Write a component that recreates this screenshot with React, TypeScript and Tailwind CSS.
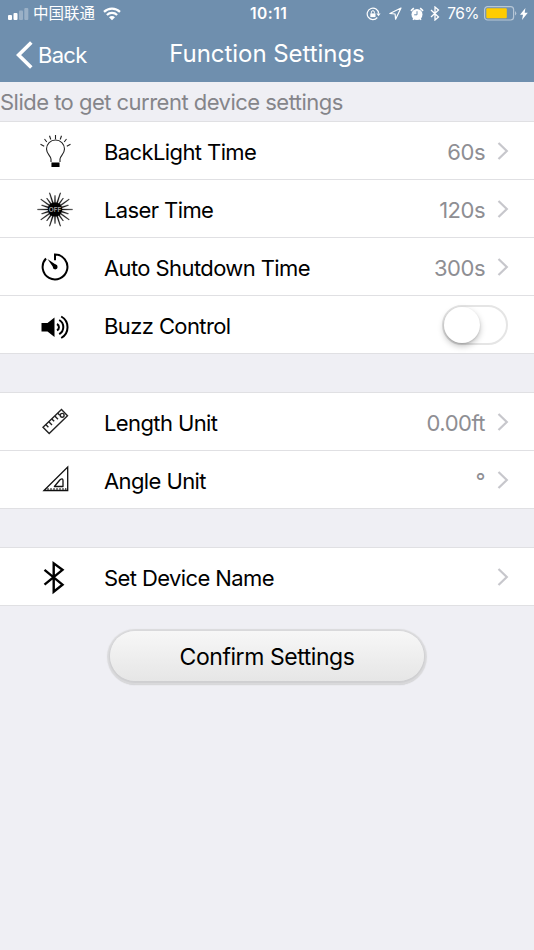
import type { ReactNode } from "react";

interface RowProps {
  icon: ReactNode;
  label: string;
  value?: string;
  toggle?: boolean;
}

function Chevron() {
  return (
    <svg width="12" height="20" viewBox="0 0 12 20" fill="none" stroke="#c7c7cc" strokeWidth="2.2">
      <path d="M1.5 2 9.8 10 1.5 18" />
    </svg>
  );
}

function BulbIcon() {
  return (
    <svg width="40" height="40" viewBox="0 0 40 40" fill="none" stroke="#222" strokeWidth="1.1">
      <path d="M16 31v-3c0-3-4.5-5-4.5-10a9 9 0 0 1 18 0c0 5-4.5 7-4.5 10v3" />
      <path d="M20.5 4v4.2M14.5 4.8l1.3 3.7M26.5 4.8l-1.3 3.7M9.5 8l2.3 3M31.5 8l-2.3 3M5.5 13.3l3.7 1.9M35.5 13.3l-3.7 1.9" />
      <path d="M17 32h7v3.5h-7z" fill="#000" stroke="#000" />
    </svg>
  );
}

function LaserIcon() {
  const rays = Array.from({ length: 20 }, (_, i) => i * 18);
  return (
    <svg width="40" height="40" viewBox="0 0 40 40">
      {rays.map((deg, i) => (
        <path
          key={deg}
          d={i % 2 === 0 ? "M19.4 13 19.7 2.5h.6l.3 10.5z" : "M19.4 13 19.7 6h.6l.3 7z"}
          transform={`translate(0 .5) rotate(${deg + 90} 20 20)`}
          fill="#111"
          stroke="#111"
          strokeWidth="0.3"
        />
      ))}
      <circle cx="20" cy="20.5" r="7.3" fill="#000" />
      <text x="20" y="22.9" textAnchor="middle" fontSize="6.4" fontWeight="600" fill="#aaa" fontFamily="Inter, sans-serif">
        OFF
      </text>
    </svg>
  );
}

function TimerIcon() {
  return (
    <svg width="40" height="40" viewBox="0 0 40 40" fill="none" stroke="#000" strokeWidth="2">
      <path d="M11 11.5A12.4 12.4 0 1 0 20 7.6v5.6" />
      <path d="M12.5 12 21.3 18 18.5 20.8z" fill="#000" stroke="none" />
      <circle cx="20.2" cy="20" r="2.4" fill="#000" stroke="none" />
    </svg>
  );
}

function SpeakerIcon() {
  return (
    <svg width="40" height="40" viewBox="0 0 40 40" fill="none" stroke="#000" strokeWidth="2">
      <path d="M6.5 18h6l7-5.5v19.5l-7-5.5h-6z" fill="#000" stroke="none" />
      <path d="M22 19a3.6 3.6 0 0 1 0 6.4M24.2 15a8.2 8.2 0 0 1 0 14.2M26.2 11.5a12.3 12.3 0 0 1 0 21.5" />
    </svg>
  );
}

function RulerIcon() {
  return (
    <svg width="40" height="40" viewBox="0 0 40 40" fill="none" stroke="#222" strokeWidth="1.4">
      <path d="M8 25.2 26.5 7.5l6 6.2L14.2 31.5z" />
      <path d="m10.8 22.6 2.6 2.6M13.8 19.8l3.2 3.2M16.8 16.9l2.4 2.4M19.8 14l3.2 3.2M22.8 11.2l2 2" />
      <circle cx="27.2" cy="13.3" r="1.9" />
    </svg>
  );
}

function TriangleIcon() {
  return (
    <svg width="40" height="40" viewBox="0 0 40 40" fill="none" stroke="#111" strokeWidth="1.3">
      <path d="M9 30.5 32.7 7v23.5z" />
      <path d="M19.4 26.5 24.8 20q3.2-2.4 3.2.6v5.9z" strokeLinejoin="round" />
      <path d="M13 30v-2M16 30v-2M19 30v-2M22 30v-2M25 30v-2M28 30v-2M30.8 30v-2" strokeWidth="1" />
    </svg>
  );
}

function BluetoothIcon() {
  return (
    <svg width="40" height="40" viewBox="0 0 40 40" fill="none" stroke="#000" strokeWidth="2.4">
      <path d="m9.5 12.8 18 14.9-8.8 7V6.3l8.8 6.5-18 14.9" />
    </svg>
  );
}

function Row({ icon, label, value, toggle }: RowProps) {
  return (
    <div className="flex h-[58px] items-center border-b border-[#e0e0e3] bg-white pr-[25px] pl-[35px]">
      <div className="mr-[29px] h-10 w-10 shrink-0">{icon}</div>
      <span className="flex-1 pt-[3px] text-[22px] tracking-[-0.6px] whitespace-nowrap text-black">{label}</span>
      {value && <span className="mr-[12px] pt-[3px] text-[22px] tracking-[-0.5px] text-[#8e8e93]">{value}</span>}
      {toggle ? (
        <div className="mr-px h-[40px] w-[66px] rounded-full border-2 border-[#e5e5e5] bg-white">
          <div className="h-[36px] w-[36px] rounded-full bg-white shadow-[0_3px_6px_rgba(0,0,0,0.25),0_1px_2px_rgba(0,0,0,0.12)]" />
        </div>
      ) : (
        <Chevron />
      )}
    </div>
  );
}

function StatusBar() {
  return (
    <div className="flex h-[27px] items-center text-[14px] text-white">
      <div className="flex w-[250px] items-center pl-2">
        <svg width="21" height="14" viewBox="0 0 21 14" fill="#fff">
          <rect x="0" y="8" width="4" height="5" rx="1" />
          <rect x="5.5" y="6" width="4" height="7" rx="1" />
          <rect x="11" y="3.5" width="4" height="9.5" rx="1" opacity=".3" />
          <rect x="16.3" y="1" width="4" height="12" rx="1" opacity=".3" />
        </svg>
        <span className="ml-1 text-[15.5px] leading-none">中国联通</span>
        <svg className="ml-[8px]" width="18" height="14" viewBox="0 0 18 14" fill="none" stroke="#fff" strokeWidth="2.2">
          <path d="M1 4.9a11.5 11.5 0 0 1 16 0M3.9 8a7.2 7.2 0 0 1 10.2 0" />
          <path d="M9 13.2 6 10.3a4.2 4.2 0 0 1 6 0z" fill="#fff" stroke="none" />
        </svg>
      </div>
      <span className="pt-px text-[15.5px] font-semibold tracking-[0.5px]">10:11</span>
      <div className="ml-auto flex items-center pr-[6px]">
        <svg width="15" height="14" viewBox="0 0 15 14" fill="none" stroke="#fff" strokeWidth="1.2">
          <path d="M11.3 10.5A5.7 5.7 0 1 1 12.6 6.5" />
          <path d="M10.4 6.4h4.2l-2.1 2.8z" fill="#fff" stroke="none" />
          <path d="M4.3 6.4h5.2v3.7H4.3z" fill="#fff" stroke="none" />
          <path d="M5.4 6.5V5.2a1.5 1.5 0 0 1 3 0v1.3" strokeWidth="1" />
        </svg>
        <svg className="ml-[8px]" width="13" height="13" viewBox="0 0 13 13" fill="none" stroke="#fff" strokeWidth="1.2">
          <path d="M12 1 .9 6.5l5.2.5.5 5.2z" strokeLinejoin="round" />
        </svg>
        <svg className="ml-[8px]" width="14" height="14" viewBox="0 0 14 14">
          <circle cx="7" cy="7.5" r="5.5" fill="#fff" />
          <path d="M.9 3.8 3.8 1.2M13.1 3.8l-2.9-2.6M3 12.8l1.3-1.6M11 12.8l-1.3-1.6" stroke="#fff" strokeWidth="1.6" />
          <path d="M7 4.2v3.6H4.2" stroke="#6f8fae" fill="none" strokeWidth="1" />
        </svg>
        <svg className="ml-[6px]" width="10" height="15" viewBox="0 0 10 15" fill="none" stroke="#fff" strokeWidth="1.3">
          <path d="m1 4 7.5 7L5 14V1l3.5 3L1 11" />
        </svg>
        <span className="ml-[7px] pt-px text-[15.5px] tracking-[-0.5px]">76%</span>
        <svg className="ml-[5px]" width="33" height="15" viewBox="0 0 33 15">
          <rect x=".6" y=".6" width="29" height="13.4" rx="3" fill="none" stroke="#fff" strokeOpacity=".5" strokeWidth="1.2" />
          <rect x="2.3" y="2.3" width="20.5" height="10" rx="1" fill="#fc0" />
          <path d="M31 5q2.6 2.3 0 4.6z" fill="#fff" opacity=".5" />
        </svg>
        <svg className="ml-[3px]" width="8" height="12" viewBox="0 0 8 12" fill="#fff">
          <path d="M5.4 0 0 6.8h3L2 12l5.8-7.3H4.7z" />
        </svg>
      </div>
    </div>
  );
}

export default function App() {
  return (
    <div className="flex h-[950px] w-[534px] flex-col overflow-hidden bg-[#efeff4] font-['Inter','Noto_Sans_CJK_SC',sans-serif]">
      <header className="h-[82px] bg-[#6f8fae] text-white">
        <StatusBar />
        <div className="grid h-[55px] grid-cols-[169px_196px_1fr] items-center">
          <div className="flex items-center pl-4">
            <svg width="17" height="28" viewBox="0 0 17 28" fill="none" stroke="#fff" strokeWidth="3.6">
              <path d="M15.3 1.5 2.6 14l12.7 12.5" />
            </svg>
            <span className="ml-[5px] pt-px text-[22px] tracking-[-0.7px]">Back</span>
          </div>
          <h1 className="pb-[2px] text-center text-[24px] tracking-[-0.05px] whitespace-nowrap">Function Settings</h1>
        </div>
      </header>

      <div className="flex h-[40px] items-center border-b border-[#e0e0e3] pt-[2px] text-[22px] tracking-[-0.52px] text-[#85858a]">
        Slide to get current device settings
      </div>
      <Row icon={<BulbIcon />} label="BackLight Time" value="60s" />
      <Row icon={<LaserIcon />} label="Laser Time" value="120s" />
      <Row icon={<TimerIcon />} label="Auto Shutdown Time" value="300s" />
      <Row icon={<SpeakerIcon />} label="Buzz Control" toggle />

      <div className="mt-[38px] border-t border-[#e0e0e3]">
        <Row icon={<RulerIcon />} label="Length Unit" value="0.00ft" />
        <Row icon={<TriangleIcon />} label="Angle Unit" value="°" />
      </div>

      <div className="mt-[38px] border-t border-[#e0e0e3]">
        <Row icon={<BluetoothIcon />} label="Set Device Name" />
      </div>

      <button className="mx-auto mt-[25px] h-[50px] w-[314px] rounded-full bg-linear-to-b from-[#f7f7f7] to-[#e6e6e6] pt-[3px] text-[23px] tracking-[-0.45px] text-black shadow-[0_1px_1px_1px_#cfcfd1,0_1px_1px_3px_#dadadc,0_3px_1px_1px_#c8c8ca]">
        Confirm Settings
      </button>
    </div>
  );
}
